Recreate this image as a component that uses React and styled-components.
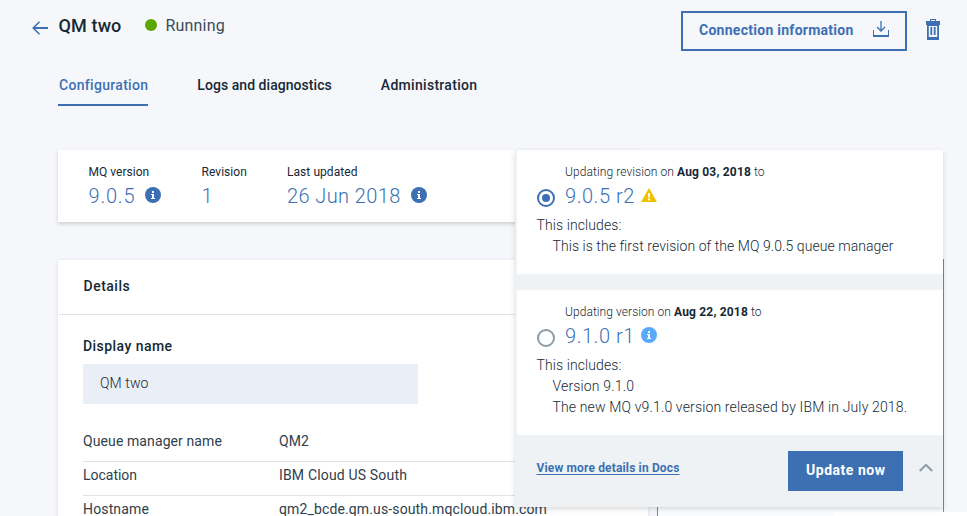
import React from 'react';
import styled, { createGlobalStyle } from 'styled-components';

const blue = '#3d70b2';
const ink = '#152935';
const softInk = '#2f404c';

const GlobalStyle = createGlobalStyle`
  *, *::before, *::after { box-sizing: border-box; }
  body {
    margin: 0;
    background: #f5f7fb;
    color: ${ink};
    font-family: Roboto, "Noto Sans", sans-serif;
    font-size: 14px;
    line-height: 20px;
  }
  p, h1, h2, h3, ul, dl, dd, dt { margin: 0; padding: 0; font: inherit; }
  svg { display: block; flex: none; }
`;

const Page = styled.div`
  height: 516px;
  overflow: hidden;
  display: flex;
  flex-direction: column;
`;

const Text = styled.span`
  display: block;
  white-space: pre;
  font-weight: ${(p) => p.$weight || 400};
  letter-spacing: ${(p) => p.$track || 0}px;
`;

/* Header */
const Header = styled.header`
  display: flex;
  flex: none;
  align-items: flex-start;
  height: 66px;
  padding: 11px 27px 0 32px;
`;

const BackIcon = styled.svg`
  margin-top: 10px;
`;

const Title = styled(Text).attrs({ as: 'h1' })`
  margin: 3px 0 0 10.5px;
  font-size: 18px;
  line-height: 24px;
`;

const StatusDot = styled.span`
  width: 12px;
  height: 12px;
  margin: 8px 8.5px 0 23.5px;
  border-radius: 50%;
  background: #5aa700;
`;

const StatusText = styled(Text)`
  margin-top: 5px;
  font-size: 16px;
  color: #3a4b58;
`;

const HeaderActions = styled.div`
  display: flex;
  margin-left: auto;
`;

const OutlineButton = styled.button`
  display: flex;
  justify-content: space-between;
  width: 226px;
  height: 40px;
  padding: 7px 16px 0 16px;
  border: 2px solid ${blue};
  background: transparent;
  color: ${blue};
  font: 14px/20px Roboto, sans-serif;
`;

const TrashIcon = styled.svg`
  margin: 8px 0 0 19px;
`;

/* Tabs */
const Tabs = styled.nav`
  display: flex;
  flex: none;
  gap: 48px;
  height: 84px;
  padding: 9px 0 0 58px;
`;

const Tab = styled.a`
  height: 31px;
  padding-left: 1px;
  border-bottom: 2px solid ${(p) => (p.$active ? blue : 'transparent')};
  color: ${(p) => (p.$active ? blue : ink)};
`;

/* Main */
const Main = styled.main`
  position: relative;
  flex: 1;
  min-height: 0;
  padding-left: 58px;
`;

const VersionCard = styled.section`
  display: flex;
  width: 580px;
  height: 72px;
  padding: 14px 0 0 30.5px;
  background: #fff;
  box-shadow: 0 2px 4px rgba(0, 0, 0, 0.16);
`;

const Fact = styled.div`
  width: ${(p) => p.$width}px;
  flex: none;
`;

const Small = styled(Text)`
  font-size: 12px;
  line-height: 16px;
`;

const VersionLine = styled.div`
  display: flex;
  align-items: flex-start;
  gap: ${(p) => p.$gap}px;
  margin-top: 3px;
  height: 26px;
`;

const VersionValue = styled(Text)`
  font-size: 20px;
  line-height: 26px;
  color: ${blue};
`;

const BadgeIcon = styled.svg`
  margin-top: ${(p) => p.$drop || 4}px;
`;

const Columns = styled.div`
  display: flex;
  gap: 9px;
  margin-top: 38px;
`;

const DetailsCard = styled.section`
  width: 590px;
  height: 270px;
  background: #fff;
  box-shadow: 0 1px 4px rgba(0, 0, 0, 0.12);
`;

const DetailsHeader = styled.div`
  height: 55px;
  padding: 16px 24.5px 0;
  margin-left: 1px;
  border-bottom: 1px solid #dfe3e6;
`;

const DetailsBody = styled.div`
  padding: 21px 25px 0;
`;

const NameField = styled.div`
  width: 335px;
  height: 40px;
  margin: 8px 0 24px;
  padding: 9px 17px;
  background: #eaeff7;
`;

const DetailList = styled.dl``;

const DetailRow = styled.div`
  display: grid;
  grid-template-columns: 196px 1fr;
  height: 34px;
  padding-top: 3px;
  border-bottom: 1px solid #dfe3e6;
  color: ${softInk};
`;

const SideColumn = styled.aside`
  width: 287px;
  height: 270px;
  margin-top: -1px;
`;

const SideCard = styled.div`
  height: 253px;
  border: 1px solid #6689bf;
  border-width: 0 1px;
  background: #fbfcfe;
`;

const SideFooter = styled.div`
  width: 310px;
  height: 17px;
  background: linear-gradient(90deg, #fbfcfe 175px, #fff 175px);
  border-left: 1px solid #6689bf;
`;

/* Update menu */
const UpdateMenu = styled.section`
  position: absolute;
  top: 0;
  left: 515px;
  width: 428px;
  height: 357px;
  padding-left: 2px;
  background: #eef2f5;
  box-shadow: 0 2px 5px rgba(0, 0, 0, 0.15);
`;

const UpdateOption = styled.div`
  display: grid;
  grid-template-columns: 28px 1fr;
  grid-template-rows: 51px auto;
  align-content: start;
  height: ${(p) => p.$height}px;
  margin-bottom: ${(p) => p.$gap || 0}px;
  padding: 14px 0 0 20px;
  background: #fff;
`;

const Radio = styled.span`
  display: flex;
  align-items: center;
  justify-content: center;
  width: 18px;
  height: 18px;
  margin-top: 25px;
  border: 2px solid ${(p) => (p.$on ? blue : '#8c9ba5')};
  border-radius: 50%;

  &::after {
    content: '';
    width: 8px;
    height: 8px;
    border-radius: 50%;
    background: ${(p) => (p.$on ? blue : 'transparent')};
  }
`;

const Schedule = styled.div`
  display: flex;
  gap: 3px;
`;

const Includes = styled.div`
  grid-column: 1 / -1;
  margin-left: -0.5px;
  line-height: 21px;
`;

const IncludeList = styled.ul`
  padding-left: 16px;
  list-style: none;
`;

const MenuFooter = styled.div`
  display: flex;
  align-items: flex-start;
  padding: 16px 10px 0 19.5px;
`;

const DocsLink = styled(Small).attrs({ as: 'a' })`
  margin-top: 9px;
  color: ${blue};
  text-decoration: underline;
  text-underline-offset: 2px;
`;

const PrimaryButton = styled.button`
  width: 115px;
  height: 40px;
  margin: 0 16px 0 auto;
  padding: 0 0 2px 18px;
  border: 0;
  background: ${blue};
  color: #fff;
  font: 14px/20px Roboto, sans-serif;
  text-align: left;
`;

const Chevron = styled.svg`
  margin-top: 12px;
`;

const InfoIcon = ({ color = blue, drop }) => (
  <BadgeIcon $drop={drop} width="16" height="16" viewBox="0 0 16 16">
    <circle cx="8" cy="8" r="8" fill={color} />
    <path d="M7 4h2v2H7zM6 7h3v4h1v1H6v-1h1V8H6z" fill="#fff" />
  </BadgeIcon>
);

const WarningIcon = () => (
  <BadgeIcon $drop={5} width="16" height="14" viewBox="0 0 16 14">
    <path d="M8 0l8 14H0z" fill="#efc100" />
    <path d="M7.1 5h1.8v4.5H7.1zM7.1 10.6h1.8v1.8H7.1z" fill="#fff" />
  </BadgeIcon>
);

const details = [
  ['Queue manager name', 0.1, 'QM2', 0.09],
  ['Location', -0.02, 'IBM Cloud US South', 0.168],
  ['Hostname', 0.147, 'qm2_bcde.qm.us-south.mqcloud.ibm.com', 0.129],
];

const options = [
  {
    on: true,
    height: 124,
    gap: 16,
    lead: ['Updating revision on', 0.087],
    date: 'Aug 03, 2018',
    version: '9.0.5 r2',
    icon: <WarningIcon />,
    items: [['This is the first revision of the MQ 9.0.5 queue manager', 0.06]],
  },
  {
    on: false,
    height: 145,
    lead: ['Updating version on', 0.069],
    date: 'Aug 22, 2018',
    version: '9.1.0 r1',
    icon: <InfoIcon color="#5aaafa" />,
    items: [
      ['Version 9.1.0', 0.16],
      ['The new MQ v9.1.0 version released by IBM in July 2018.', 0.145],
    ],
  },
];

export default function App() {
  return (
    <Page>
      <GlobalStyle />
      <Header>
        <BackIcon width="16" height="14" viewBox="0 0 16 14" fill="none" stroke={blue}>
          <path d="M1 7h15" strokeWidth="2" />
          <path d="M7.5.7L1.2 7l6.3 6.3" strokeWidth="1.6" />
        </BackIcon>
        <Title $weight={500} $track={0.13}>QM two</Title>
        <StatusDot />
        <StatusText $track={0.2}>Running</StatusText>
        <HeaderActions>
          <OutlineButton>
            <Text $weight={700} $track={0.27}>Connection information</Text>
            <svg width="16" height="17" viewBox="0 0 16 17" fill="none" stroke={blue}>
              <path d="M8 1v10M4 7l4 4 4-4" strokeWidth="1.3" />
              <path d="M.5 10v6M15.5 10v6" strokeWidth="1" />
              <path d="M0 16h16" strokeWidth="2" />
            </svg>
          </OutlineButton>
          <TrashIcon width="14" height="21" viewBox="0 0 14 21" fill={blue}>
            <path d="M4 0h6v2h4v4H0V2h4z" />
            <path fill="#f5f7fb" d="M5 1h4v1H5zM3 7h8v11H3z" />
            <path fillRule="evenodd" d="M1 6h12v15H1zM2.8 7v11h8.4V7z" />
            <path d="M4.4 8h1.8v8H4.4zM7.8 8h1.8v8H7.8z" />
          </TrashIcon>
        </HeaderActions>
      </Header>

      <Tabs>
        <Tab $active><Text $weight={500} $track={0.308}>Configuration</Text></Tab>
        <Tab><Text $weight={500} $track={0.05}>Logs and diagnostics</Text></Tab>
        <Tab><Text $weight={500} $track={0.3}>Administration</Text></Tab>
      </Tabs>

      <Main>
        <VersionCard>
          <Fact $width={113}>
            <Small $track={0.03}>MQ version</Small>
            <VersionLine $gap={9.6}>
              <VersionValue $weight={300} $track={0.8}>9.0.5</VersionValue>
              <InfoIcon />
            </VersionLine>
          </Fact>
          <Fact $width={85.5}>
            <Small $track={0.05}>Revision</Small>
            <VersionLine>
              <VersionValue $weight={300}>1</VersionValue>
            </VersionLine>
          </Fact>
          <Fact $width={160}>
            <Small $track={0.059}>Last updated</Small>
            <VersionLine $gap={10}>
              <VersionValue $weight={300} $track={0.4}>26 Jun 2018</VersionValue>
              <InfoIcon />
            </VersionLine>
          </Fact>
        </VersionCard>

        <Columns>
          <DetailsCard>
            <DetailsHeader>
              <Text as="h2" $weight={500} $track={0.5}>Details</Text>
            </DetailsHeader>
            <DetailsBody>
              <Text as="h3" $weight={500} $track={0.45}>Display name</Text>
              <NameField><Text $weight={300} $track={0.1}>QM two</Text></NameField>
              <DetailList>
                {details.map(([label, lt, value, vt]) => (
                  <DetailRow key={label}>
                    <Text as="dt" $track={lt}>{label}</Text>
                    <Text as="dd" $track={vt}>{value}</Text>
                  </DetailRow>
                ))}
              </DetailList>
            </DetailsBody>
          </DetailsCard>
          <SideColumn>
            <SideCard />
            <SideFooter />
          </SideColumn>
        </Columns>

        <UpdateMenu>
          {options.map((o) => (
            <UpdateOption key={o.version} $height={o.height} $gap={o.gap}>
              <Radio $on={o.on} />
              <div>
                <Schedule>
                  <Small $weight={300} $track={o.lead[1]}>{o.lead[0]}</Small>
                  <Small $weight={700} $track={0.183}>{o.date}</Small>
                  <Small $weight={300}>to</Small>
                </Schedule>
                <VersionLine $gap={6.2}>
                  <VersionValue $weight={300} $track={0.55}>{o.version}</VersionValue>
                  {o.icon}
                </VersionLine>
              </div>
              <Includes>
                <Text $weight={300} $track={0.1}>This includes:</Text>
                <IncludeList>
                  {o.items.map(([t, track]) => (
                    <Text as="li" key={t} $weight={300} $track={track}>{t}</Text>
                  ))}
                </IncludeList>
              </Includes>
            </UpdateOption>
          ))}
          <MenuFooter>
            <DocsLink $weight={700} $track={0.148}>View more details in Docs</DocsLink>
            <PrimaryButton>
              <Text $weight={700} $track={0.53}>Update now</Text>
            </PrimaryButton>
            <Chevron width="14" height="9" viewBox="0 0 14 9" fill="none" stroke="#8c9ba5" strokeWidth="2">
              <path d="M.8 8L7 1.8 13.2 8" />
            </Chevron>
          </MenuFooter>
        </UpdateMenu>
      </Main>
    </Page>
  );
}
